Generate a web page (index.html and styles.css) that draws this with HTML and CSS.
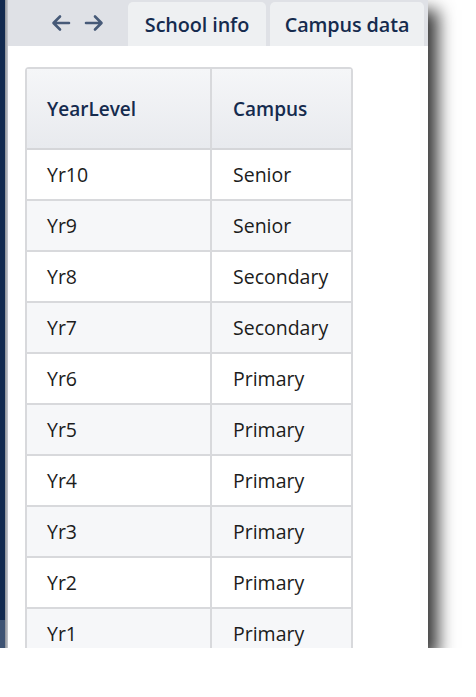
FILE: index.html
```html
<!DOCTYPE html>
<html>
<head>
<meta charset="utf-8">
<link rel="stylesheet" href="styles.css">
</head>
<body>
<div class="window">
  <div class="side"><div class="side-top"></div><div class="side-bottom"></div></div>
  <div class="edge"></div>
  <div class="main">
    <div class="tabbar">
      <div class="nav">
        <svg width="20" height="18" viewBox="0 0 20 18"><path d="M18 9H3M9 2.5L2.5 9L9 15.5" fill="none" stroke="#475a78" stroke-width="2.6" stroke-linecap="round" stroke-linejoin="round"/></svg>
        <svg width="20" height="18" viewBox="0 0 20 18"><path d="M2 9H17M11 2.5L17.5 9L11 15.5" fill="none" stroke="#475a78" stroke-width="2.6" stroke-linecap="round" stroke-linejoin="round"/></svg>
      </div>
      <div class="tab tab-school">School info</div>
      <div class="tab tab-campus">Campus data</div>
    </div>
    <div class="content">
      <table class="grid">
        <thead>
          <tr><th class="c1">YearLevel</th><th class="c2">Campus</th></tr>
        </thead>
        <tbody>
          <tr><td>Yr10</td><td>Senior</td></tr>
          <tr><td>Yr9</td><td>Senior</td></tr>
          <tr><td>Yr8</td><td>Secondary</td></tr>
          <tr><td>Yr7</td><td>Secondary</td></tr>
          <tr><td>Yr6</td><td>Primary</td></tr>
          <tr><td>Yr5</td><td>Primary</td></tr>
          <tr><td>Yr4</td><td>Primary</td></tr>
          <tr><td>Yr3</td><td>Primary</td></tr>
          <tr><td>Yr2</td><td>Primary</td></tr>
          <tr><td>Yr1</td><td>Primary</td></tr>
        </tbody>
      </table>
    </div>
  </div>
</div>
</body>
</html>
```

FILE: styles.css
```css
html, body {
  margin: 0;
  padding: 0;
  background: #ffffff;
}
body {
  font-family: "Open Sans", "Noto Sans", sans-serif;
}
.window {
  width: 428px;
  height: 648px;
  display: flex;
  overflow: hidden;
  background: #ffffff;
  box-shadow: 10px 10px 16px rgba(0, 0, 0, 0.78);
}
.side {
  width: 5px;
  display: flex;
  flex-direction: column;
}
.side-top {
  height: 620px;
  background: #122a4f;
}
.side-bottom {
  flex: 1;
  background: #3e5373;
}
.edge {
  width: 3px;
  background: linear-gradient(to right, #8c8f95, #c8cad0);
}
.main {
  flex: 1;
  display: flex;
  flex-direction: column;
  min-width: 0;
}
.tabbar {
  height: 46px;
  background: #dfe1e6;
  display: flex;
  align-items: flex-end;
}
.nav {
  width: 120px;
  height: 46px;
  display: flex;
  align-items: center;
  gap: 13px;
  padding-left: 43px;
  box-sizing: border-box;
}
.tab {
  height: 44px;
  background: #eef0f2;
  border-radius: 5px 5px 0 0;
  display: flex;
  align-items: center;
  justify-content: center;
  color: #152b4e;
  font-weight: 600;
  font-size: 19.8px;
  letter-spacing: -0.1px;
  box-sizing: border-box;
  white-space: nowrap;
}
.tab-school {
  width: 138px;
}
.tab-campus {
  width: 154px;
  margin-left: 4px;
}
.content {
  flex: 1;
  padding: 21px 0 0 17px;
}
.grid {
  border-collapse: separate;
  border-spacing: 0;
  border: 2px solid #d8d9dc;
  border-radius: 4px 4px 0 0;
  font-size: 19.5px;
  color: #1c1c1c;
  table-layout: fixed;
  width: 328px;
}
.grid th {
  height: 79px;
  text-align: left;
  font-weight: 600;
  font-size: 19px;
  color: #152b4e;
  background: linear-gradient(to bottom, #f5f6f8, #e8eaee);
  border-bottom: 2px solid #d5d6d9;
  padding: 0 0 0 20px;
}
.grid th.c1 {
  width: 163px;
  border-right: 2px solid #d8d9dc;
}
.grid th.c2 {
  padding-left: 21px;
}
.grid td {
  height: 49px;
  padding: 0 0 0 20px;
  border-bottom: 2px solid #d8d9dc;
  white-space: nowrap;
}
.grid td:first-child {
  border-right: 2px solid #d8d9dc;
}
.grid td:last-child {
  padding-left: 21px;
}
.grid tbody tr:nth-child(even) td {
  background: #f6f7f9;
}
```
